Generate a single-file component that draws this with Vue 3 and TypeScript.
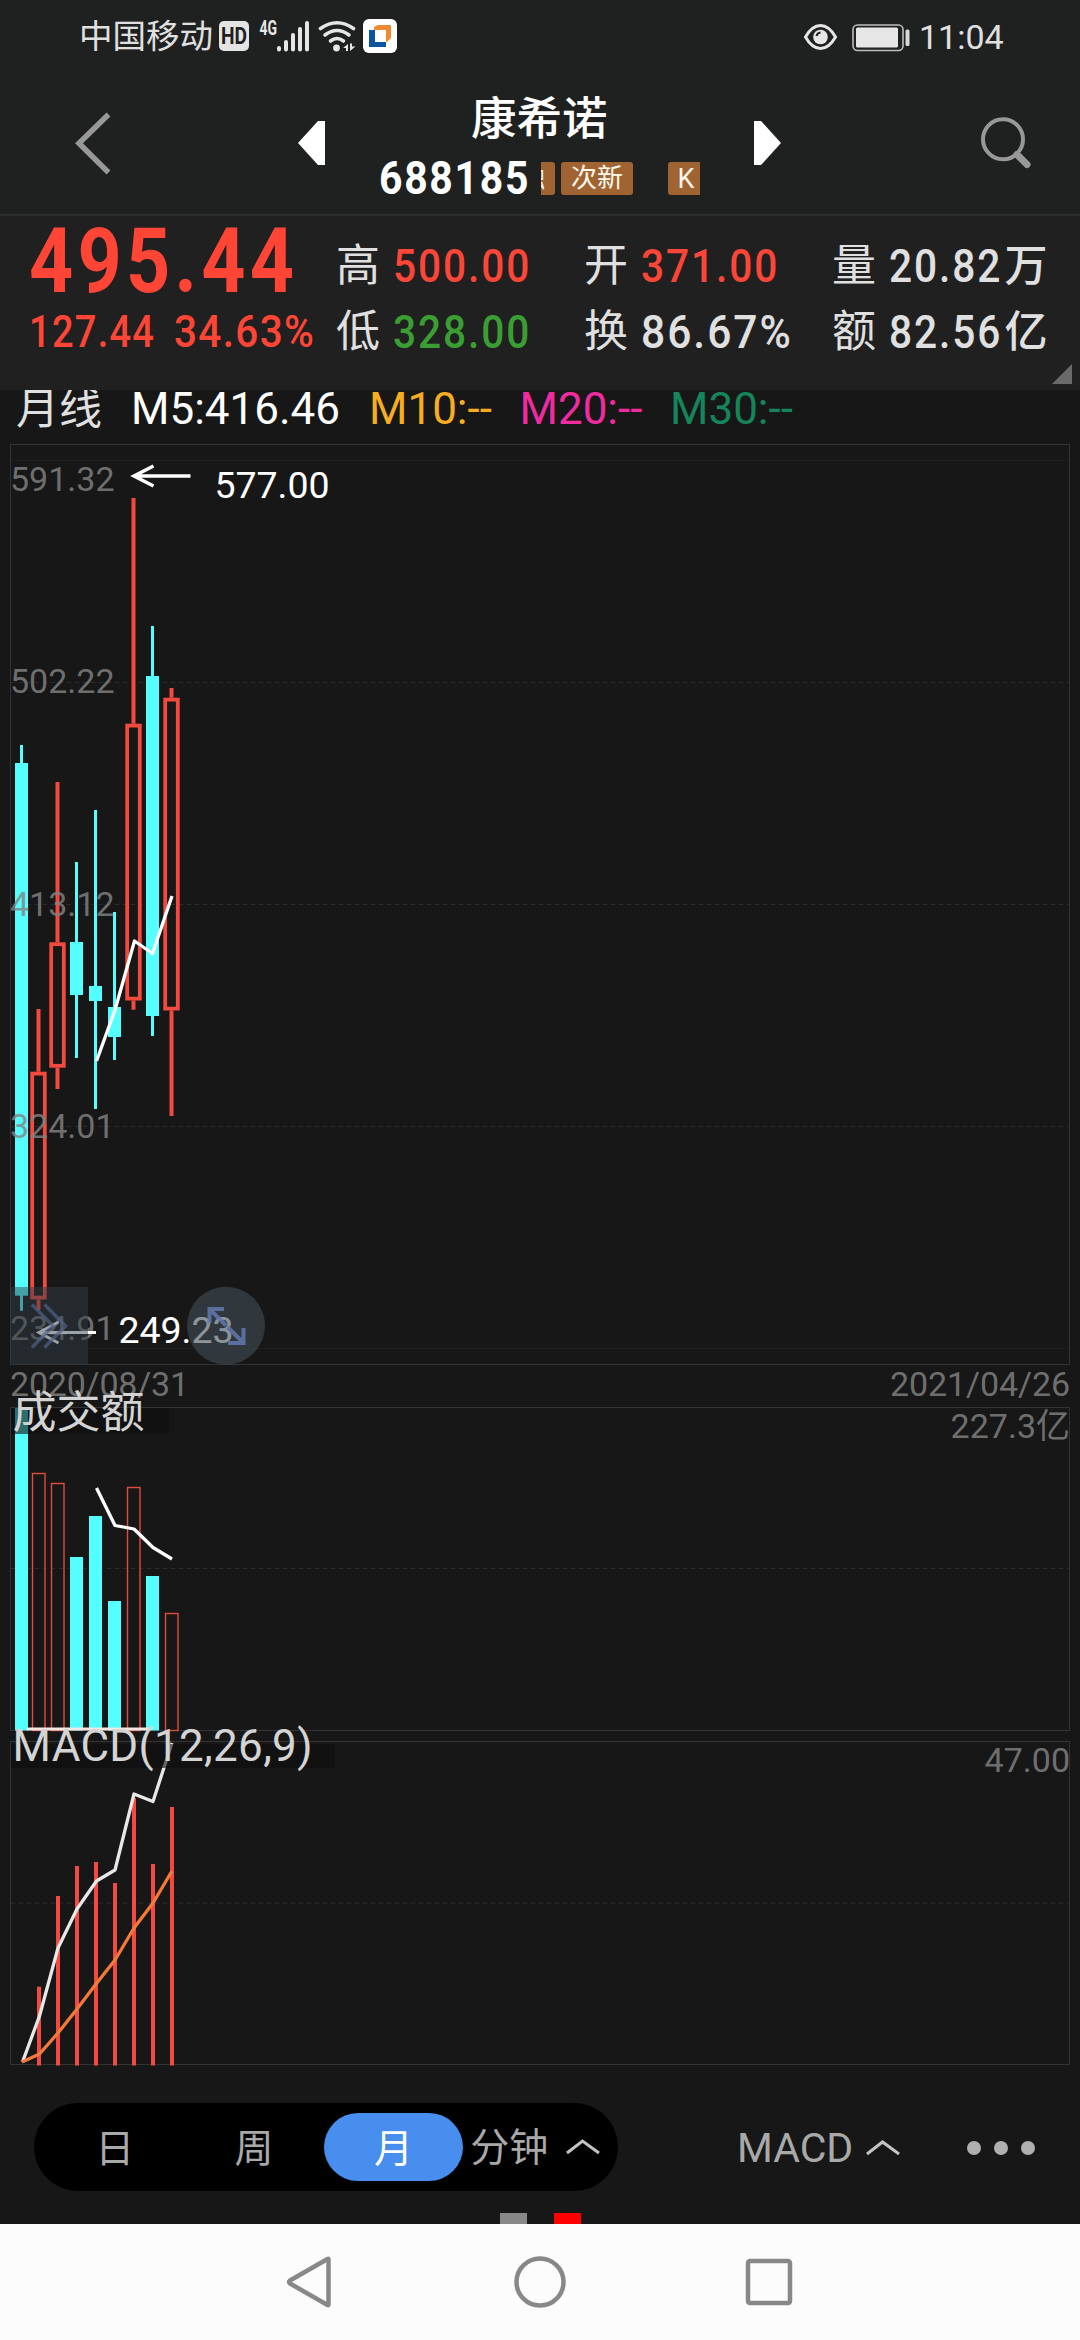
<script setup lang="ts">
interface Candle {
  x: number
  high: number
  top: number
  bottom: number
  low: number
  up: boolean
}

interface Bar {
  x: number
  top: number
  up: boolean
}

const candles: Candle[] = [
  { x: 21.5, high: 745, top: 763, bottom: 1295.7, low: 1310.7, up: false },
  { x: 38.5, high: 1009, top: 1071.7, bottom: 1299.5, low: 1310, up: true },
  { x: 57.5, high: 782, top: 942.3, bottom: 1067.7, low: 1089, up: true },
  { x: 76.5, high: 862, top: 942, bottom: 995, low: 1058, up: false },
  { x: 95.5, high: 810, top: 986, bottom: 1001, low: 1109, up: false },
  { x: 114.5, high: 912, top: 1007, bottom: 1037, low: 1060, up: false },
  { x: 133.5, high: 498, top: 723.7, bottom: 1000.5, low: 1009.7, up: true },
  { x: 152.5, high: 626, top: 676, bottom: 1016, low: 1036, up: false },
  { x: 171.5, high: 688, top: 697.7, bottom: 1010.5, low: 1116, up: true },
]

const volumes: Bar[] = [
  { x: 21.5, top: 1408, up: false },
  { x: 38.5, top: 1473, up: true },
  { x: 57.5, top: 1483, up: true },
  { x: 76.5, top: 1557, up: false },
  { x: 95.5, top: 1516, up: false },
  { x: 114.5, top: 1601, up: false },
  { x: 133.5, top: 1487, up: true },
  { x: 152.5, top: 1576, up: false },
  { x: 171.5, top: 1613, up: true },
]

const macdBars = [
  [39, 1986.7], [58, 1896], [77, 1866], [96, 1862],
  [115, 1883], [134, 1798], [153, 1864], [172, 1807],
]

const priceLabels = [
  { y: 491, text: '591.32' },
  { y: 693, text: '502.22' },
  { y: 916, text: '413.12' },
  { y: 1138, text: '324.01' },
  { y: 1340, text: '234.91' },
]

const stats = [
  { label: '高', value: '500.00', unit: '', tone: 'red' },
  { label: '开', value: '371.00', unit: '', tone: 'red' },
  { label: '量', value: '20.82', unit: '万', tone: 'plain' },
  { label: '低', value: '328.00', unit: '', tone: 'green' },
  { label: '换', value: '86.67%', unit: '', tone: 'wide' },
  { label: '额', value: '82.56', unit: '亿', tone: 'plain' },
]

const averages = [
  { name: 'm5', text: 'M5:416.46' },
  { name: 'm10', text: 'M10:--' },
  { name: 'm20', text: 'M20:--' },
  { name: 'm30', text: 'M30:--' },
]
</script>

<template>
  <div class="screen">
    <div class="status">
      <span class="carrier">中国移动</span>
      <svg class="status-icons" width="180" height="40" viewBox="218 17 180 40">
        <rect x="219" y="21" width="30" height="30" rx="5" fill="#e4e4e4" />
        <text x="234" y="43.5" text-anchor="middle" textLength="26" lengthAdjust="spacingAndGlyphs" class="hd">HD</text>
        <text x="259.5" y="35" textLength="17.5" lengthAdjust="spacingAndGlyphs" class="net">4G</text>
        <g stroke="#e6e6e6" stroke-width="4" stroke-linecap="round">
          <path d="M279 48v1.500M286 42v7.500M293 35v14.500M300 29v20.500M307 23v26.500" />
        </g>
        <g fill="none" stroke="#e6e6e6" stroke-width="3.6" stroke-linecap="round">
          <path d="M320.500 28.500Q337 17 353.500 28.500" />
          <path d="M325 35Q337 26 349 35" />
          <path d="M330.500 41Q337 36 343.500 41" />
        </g>
        <circle cx="336.500" cy="48" r="3.400" fill="#e6e6e6" />
        <path d="M348 44v7h-2v-3h-3zM350 43.500v7.500l5.500-4.500h-3.500v-3z" fill="#e6e6e6" />
        <rect x="363" y="19" width="34" height="34" rx="6" fill="#fff" />
        <path d="M369 30h6v12h11v5h-17z" fill="#0b559f" />
        <path d="M374 27l4-2h13v13l-4 4h-1V30h-12z" fill="#f08a30" />
      </svg>
      <span class="spacer"></span>
      <svg width="108" height="32" viewBox="803 20 108 32">
        <path d="M805.500 36Q812 24.500 820.500 24.500T835.500 36Q829 47.500 820.500 47.500T805.500 36z" fill="none" stroke="#e6e6e6" stroke-width="3" />
        <circle cx="820.500" cy="36" r="7.300" fill="#e6e6e6" />
        <path d="M816.500 35q.5-3 4-3.500" fill="none" stroke="#1f2121" stroke-width="2" />
        <rect x="853" y="24" width="50" height="25.500" rx="4.500" fill="none" stroke="#bdbdbd" stroke-width="1.600" />
        <rect x="856" y="26.500" width="42" height="20" rx="1.500" fill="#e6e6e6" />
        <rect x="905.500" y="28.500" width="4" height="16.500" rx="1.500" fill="#d8d8d8" />
      </svg>
      <span class="clock">11:04</span>
    </div>

    <div class="header">
      <svg class="back" width="40" height="70" viewBox="72 108 40 70">
        <path d="M108.500 114.500L79 143.300L108.500 172.500" fill="none" stroke="#989898" stroke-width="5.500" />
      </svg>
      <svg class="prev" width="27" height="44" viewBox="0 0 27 44"><path d="M0 22L20 0h7v44h-7z" fill="#fff" /></svg>
      <div class="stock">
        <div class="name">康希诺</div>
        <div class="code-row">
          <span class="code">688185</span>
          <span class="tags">
            <span class="tag cut"><span>融</span></span>
            <span class="tag fresh">次新</span>
            <span class="tag board">K</span>
          </span>
        </div>
      </div>
      <svg class="next" width="27" height="44" viewBox="0 0 27 44"><path d="M27 22L7 0H0v44h7z" fill="#fff" /></svg>
      <svg class="search" width="56" height="56" viewBox="978 115 56 56">
        <circle cx="1003" cy="139.300" r="20" fill="none" stroke="#989898" stroke-width="4" />
        <path d="M1017 154.500L1027 164.500" stroke="#989898" stroke-width="7" stroke-linecap="round" />
      </svg>
    </div>

    <div class="quote">
      <div class="last">
        <div class="price">495.44</div>
        <div class="change"><span class="diff">127.44</span><span class="pct">34.63%</span></div>
      </div>
      <div class="stats">
        <div v-for="s in stats" :key="s.label" class="stat">
          <span class="label">{{ s.label }}</span>
          <span class="value" :class="s.tone">{{ s.value }}</span>
          <span v-if="s.unit" class="unit">{{ s.unit }}</span>
        </div>
      </div>
      <i class="corner"></i>
    </div>

    <div class="averages">
      <span class="period">月线</span>
      <span v-for="a in averages" :key="a.name" class="avg" :class="a.name">{{ a.text }}</span>
    </div>

    <svg class="chart" width="1080" height="1650" viewBox="0 435 1080 1650">
      <g fill="none" stroke="#333" stroke-width="1">
        <rect x="10.500" y="444.500" width="1059" height="920" />
        <rect x="10.500" y="1407.500" width="1059" height="323" />
        <rect x="10.500" y="1741.500" width="1059" height="323" />
      </g>
      <path d="M11 460.500H1069M11 1348.500H1069" stroke="#1e1e1e" />
      <path d="M11 682.500H1069M11 904.500H1069M11 1126.500H1069M11 1568.500H1069M11 1903H1069" stroke="#2a2a2a" stroke-dasharray="4 4" />

      <template v-for="c in candles" :key="c.x">
        <template v-if="c.up">
          <path :d="`M${c.x} ${c.high}V${c.top}M${c.x} ${c.bottom}V${c.low}`" stroke="#f24a3e" stroke-width="4" />
          <rect :x="c.x - 6.300" :y="c.top + 1.900" width="12.600" :height="c.bottom - c.top - 3.800" fill="none" stroke="#f24a3e" stroke-width="3.800" />
        </template>
        <template v-else>
          <path :d="`M${c.x} ${c.high}V${c.low}`" stroke="#55ffff" stroke-width="3" />
          <rect :x="c.x - 6.500" :y="c.top" width="13" :height="c.bottom - c.top" fill="#55ffff" />
        </template>
      </template>

      <g class="axis">
        <text v-for="p in priceLabels" :key="p.y" x="10" :y="p.y">{{ p.text }}</text>
        <text x="10" y="1396" textLength="179">2020/08/31</text>
        <text x="1070" y="1396" text-anchor="end" textLength="180">2021/04/26</text>
        <text x="1070" y="1438" text-anchor="end">227.3亿</text>
        <text x="1070" y="1772" text-anchor="end">47.00</text>
      </g>

      <polyline points="96.5,1061 115,1010 134.500,941 152.500,953.500 172,896" class="line" />

      <g fill="none" stroke="#fff" stroke-width="3.500">
        <path d="M134 476H190.500M153.500 466L134 476L153.500 486" />
        <path d="M39 1332.500H96M58.500 1322L39 1332.500L58.500 1343" stroke-width="3" />
      </g>
      <text x="214.500" y="498" class="mark" textLength="115">577.00</text>
      <text x="118.500" y="1343" class="mark" textLength="115">249.23</text>

      <rect x="10" y="1287" width="78" height="77.500" fill="rgba(48,60,70,.48)" />
      <path d="M32 1304.500L53 1326L32 1347.500M44.500 1304.500L65.500 1326L44.500 1347.500" fill="none" stroke="#50608a" stroke-opacity=".7" stroke-width="3.500" />
      <circle cx="226" cy="1325.700" r="39" fill="rgba(65,79,89,.6)" />
      <path d="M224 1309H209.500V1323M209.500 1309L226 1325.500M228 1343H243.500V1328M243.500 1343L227.500 1327" fill="none" stroke="#6379ae" stroke-opacity=".85" stroke-width="4" />

      <template v-for="v in volumes" :key="v.x">
        <rect v-if="v.up" :x="v.x - 6" :y="v.top + .5" width="12.500" :height="1730 - v.top" fill="none" stroke="#e04c40" stroke-width="1.400" />
        <rect v-else :x="v.x - 6.500" :y="v.top" width="13" :height="1730.500 - v.top" fill="#55ffff" />
      </template>
      <path d="M27 1729H150" stroke="#f6e7e2" stroke-width="3" />
      <polyline points="96.5,1488 115,1525.500 134,1529 153,1547.500 172,1559" class="line" />
      <rect x="11" y="1408" width="158" height="26" fill="rgba(13,13,13,.6)" />
      <text x="12.500" y="1427.500" class="title">成交额</text>

      <path v-for="b in macdBars" :key="b[0]" :d="`M${b[0]} ${b[1]}V2065.500`" stroke="#f24a3e" stroke-width="4" />
      <polyline points="22.5,2062 39.500,2016 58,1948 77,1909 96.500,1881 115,1870 134,1794 153,1801.500 172,1743" class="line dif" />
      <polyline points="22,2062 39.500,2054 58,2033 77,2009 96,1984 115,1960 134,1928 153,1903 172,1871" class="line dea" />
      <rect x="11" y="1744" width="324" height="24" fill="rgba(13,13,13,.6)" />
      <text x="12.500" y="1761" class="title" textLength="300">MACD(12,26,9)</text>
    </svg>

    <div class="toolbar">
      <div class="periods">
        <span class="tab">日</span>
        <span class="tab">周</span>
        <span class="tab active">月</span>
        <span class="minute">分钟</span>
        <svg width="34" height="16" viewBox="0 0 34 16"><path d="M1 14L16.500 2L33 14" fill="none" stroke="#c4c4c4" stroke-width="3" /></svg>
      </div>
      <div class="indicator">
        <span>MACD</span>
        <svg width="34" height="16" viewBox="0 0 34 16"><path d="M1 14L16.500 2L33 14" fill="none" stroke="#c4c4c4" stroke-width="3" /></svg>
      </div>
      <div class="more"><i></i><i></i><i></i></div>
    </div>
    <div class="pager"><i></i><i class="on"></i></div>

    <div class="nav">
      <svg width="520" height="60" viewBox="280 2252 520 60" fill="none" stroke="#888" stroke-width="4.500">
        <path d="M328.500 2259.500V2304.500Q328.500 2305.500 327.500 2305L290 2283.500Q288 2282 290 2280.500L327.500 2259Q328.500 2258.500 328.500 2259.500z" stroke-linejoin="round" />
        <circle cx="540" cy="2282" r="23.500" />
        <rect x="748" y="2261" width="42" height="42" rx="2" />
      </svg>
    </div>
  </div>
</template>

<style>
body {
  background: #171717;
}
</style>

<style scoped>
.screen {
  width: 1080px;
  height: 2340px;
  overflow: hidden;
  display: flex;
  flex-direction: column;
  background: #171717;
  font-family: Roboto, "Noto Sans CJK SC", sans-serif;
  color: #e0e0e0;
}
.status {
  height: 74px;
  box-sizing: border-box;
  padding: 0 73px 0 79px;
  display: flex;
  align-items: center;
  background: #1f2121;
}
.carrier {
  width: 139px;
  font-size: 33.5px;
  line-height: 74px;
  white-space: nowrap;
}
.hd {
  font: 700 23px Roboto, sans-serif;
  fill: #1f2121;
}
.net {
  font: 700 20px Roboto, sans-serif;
  fill: #e6e6e6;
}
.spacer {
  flex: 1;
}
.clock {
  width: 88px;
  margin-left: 8px;
  font-size: 34px;
  line-height: 74px;
  white-space: nowrap;
}
.header {
  height: 142px;
  box-sizing: border-box;
  border-bottom: 2px solid #2d2d2d;
  background: #1f2121;
  display: flex;
  align-items: flex-start;
}
.back {
  margin: 34px 0 0 72px;
}
.prev {
  margin: 47px 0 0 186px;
}
.stock {
  width: 429px;
  display: flex;
  flex-direction: column;
}
.name {
  margin: 11px 0 0 146px;
  font-family: "Noto Sans CJK SC", sans-serif;
  font-weight: 500;
  font-size: 45.5px;
  line-height: 60px;
  color: #fff;
}
.code-row {
  display: flex;
  align-items: center;
  height: 60px;
  padding-left: 54px;
  margin-top: 3px;
}
.code {
  flex: none;
  width: 162px;
  font-weight: 700;
  font-size: 46px;
  line-height: 60px;
  letter-spacing: 1.9px;
  color: #fff;
  transform: scaleX(0.89);
  transform-origin: left;
}
.tags {
  display: flex;
  height: 33px;
}
.tag {
  box-sizing: border-box;
  height: 33px;
  border-radius: 3px;
  background: #a06433;
  color: #fff8ec;
  font-size: 26px;
  line-height: 33px;
  text-align: center;
  overflow: hidden;
}
.cut {
  width: 14px;
  border-radius: 0 3px 3px 0;
  display: flex;
  justify-content: flex-end;
  padding-right: 10px;
}
.fresh {
  width: 72px;
  margin-left: 6px;
}
.board {
  width: 32px;
  margin-left: 35px;
  border-radius: 3px 0 0 3px;
  font-size: 27px;
  line-height: 35px;
  padding-left: 4px;
}
.next {
  margin-top: 47px;
}
.search {
  margin: 41px 0 0 197px;
}
.quote {
  position: relative;
  height: 174px;
  display: flex;
  background: #202020;
}
.last {
  width: 336px;
  color: #ff4636;
  font-weight: 500;
}
.price {
  height: 86px;
  margin-left: 29px;
  font-size: 91px;
  line-height: 90px;
  font-weight: 700;
  letter-spacing: 5px;
  transform: scaleX(0.848);
  transform-origin: left;
}
.change {
  display: flex;
  height: 60px;
  padding-left: 29px;
  font-size: 45px;
  line-height: 60px;
  letter-spacing: 1.5px;
}
.change span {
  width: 145px;
  transform-origin: left;
}
.diff {
  transform: scaleX(0.845);
}
.pct {
  transform: scaleX(0.9);
}
.stats {
  display: grid;
  grid-template-columns: 248px 248px 240px;
  grid-template-rows: 66px 66px;
  padding-top: 17px;
}
.stat {
  display: flex;
  align-items: center;
  height: 66px;
  font-size: 47px;
  line-height: 66px;
  font-weight: 500;
}
.label {
  flex: none;
  width: 56.5px;
  font-size: 44px;
  font-weight: 400;
}
.value {
  letter-spacing: 2.2px;
  transform: scaleX(0.865);
  transform-origin: left;
}
.wide {
  transform: scaleX(0.905);
}
.red {
  color: #fb4638;
}
.green {
  color: #3a9e33;
}
.unit {
  margin-left: -15px;
  font-size: 43px;
}
.corner {
  position: absolute;
  right: 8px;
  bottom: 6px;
  border-left: 20px solid transparent;
  border-bottom: 20px solid #6a6a6a;
}
.averages {
  height: 45px;
  display: flex;
  font-size: 44px;
  line-height: 39px;
  white-space: nowrap;
}
.period {
  width: 115px;
  padding-left: 16px;
  font-size: 43px;
}
.avg {
  width: 150.5px;
}
.m5 {
  width: 238px;
  color: #fff;
}
.m10 {
  color: #f5ae21;
}
.m20 {
  color: #ee2ba0;
}
.m30 {
  color: #15855b;
}
.chart {
  display: block;
  flex: none;
}
.axis {
  font-size: 34px;
  fill: rgba(131, 131, 131, 0.84);
}
.mark {
  font-size: 37.5px;
  fill: #fff;
}
.title {
  font-size: 44px;
  fill: #d4d4d4;
}
.line {
  fill: none;
  stroke: #fff;
  stroke-width: 3.3;
  stroke-linejoin: round;
}
.dif {
  stroke: #e8e8e8;
}
.dea {
  stroke: #f47a3a;
}
.toolbar {
  height: 128px;
  display: flex;
  align-items: flex-start;
  color: #a9a9a9;
}
.periods {
  box-sizing: border-box;
  width: 584px;
  height: 88px;
  margin: 18px 0 0 34px;
  padding: 0 18px 0 11px;
  border-radius: 44px;
  background: #000;
  display: flex;
  align-items: center;
}
.tab {
  width: 139.5px;
  height: 68px;
  border-radius: 34px;
  text-align: center;
  font-size: 39px;
  line-height: 72px;
}
.active {
  background: #478eee;
  color: #fff;
}
.minute {
  margin-left: 7px;
  width: 96px;
  font-size: 39px;
  line-height: 70px;
  padding-top: 2px;
}
.indicator {
  margin: 18px 0 0 119px;
  height: 90px;
  display: flex;
  align-items: center;
  font-size: 41px;
}
.indicator span {
  width: 129px;
}
.more {
  margin: 56px 0 0 67px;
  display: flex;
  gap: 13px;
}
.more i {
  width: 14px;
  height: 14px;
  border-radius: 50%;
  background: #b0b0b0;
}
.pager {
  height: 11px;
  display: flex;
  justify-content: center;
  gap: 27px;
}
.pager i {
  width: 27px;
  background: #888;
}
.pager .on {
  background: #f00;
}
.nav {
  flex: 1;
  display: flex;
  align-items: center;
  justify-content: center;
  background: #fcfcfc;
}
</style>
